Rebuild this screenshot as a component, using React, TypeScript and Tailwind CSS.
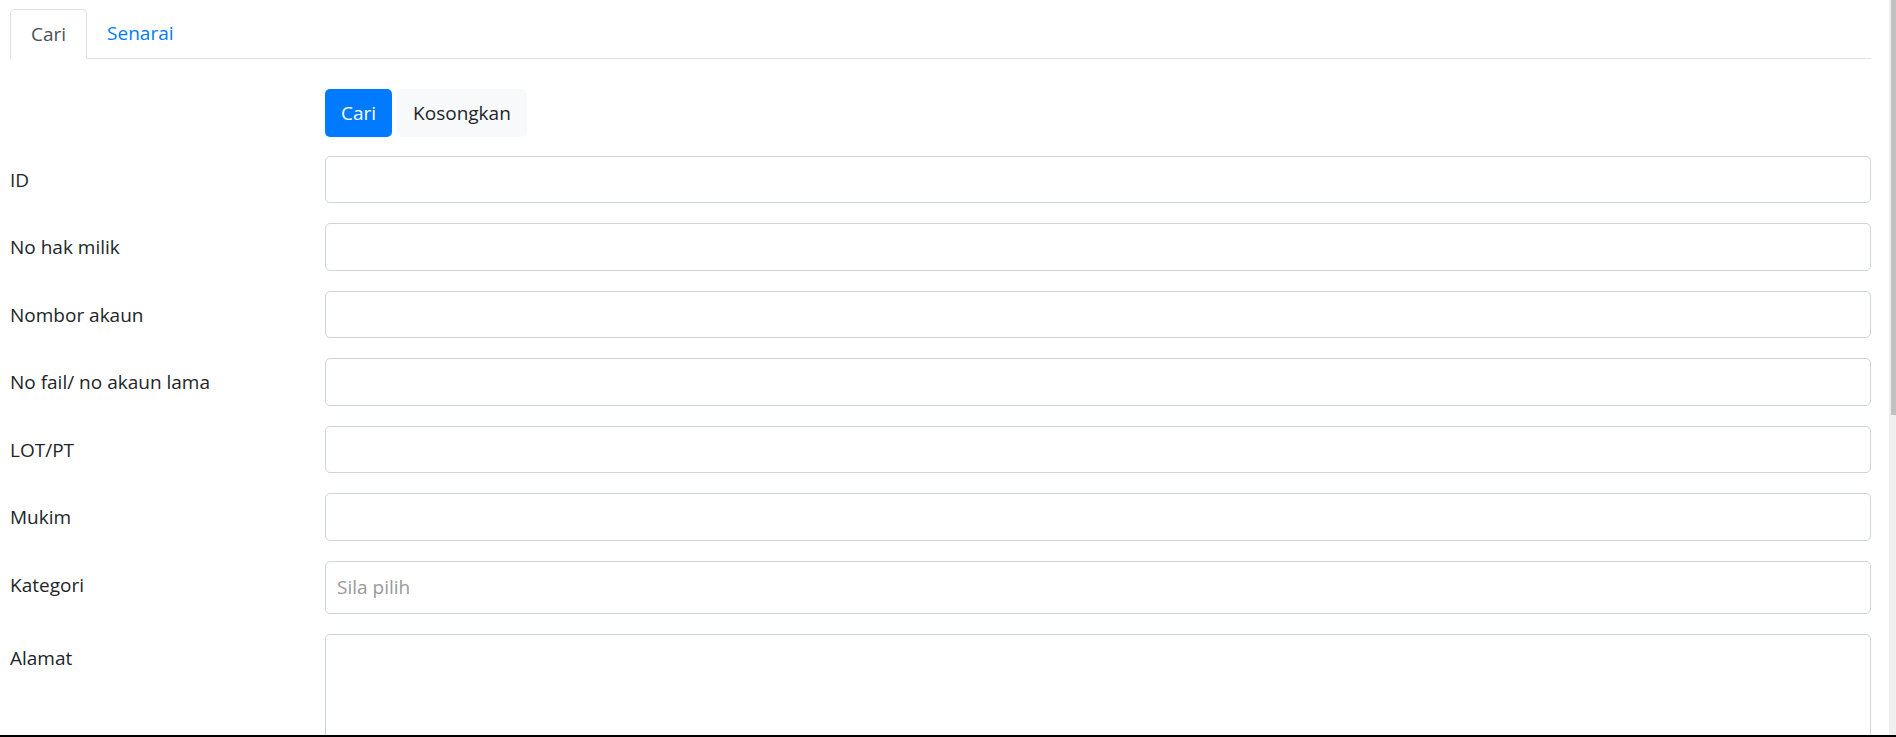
import React from "react";

const font = "font-['Open_Sans',sans-serif]";

const fields = ["ID", "No hak milik", "Nombor akaun", "No fail/ no akaun lama", "LOT/PT", "Mukim"];

const FieldRow = ({ label }: { label: string }) => (
  <div className="flex mb-[20px]">
    <label className="w-[315px] shrink-0 pt-[9px] text-[19px] leading-[30px] text-[#212529]">{label}</label>
    <input
      type="text"
      className="flex-1 h-[47.5px] rounded-[5px] border border-[#ced4da] bg-white px-[15px] text-[19px] outline-none"
    />
  </div>
);

export default function App() {
  return (
    <div className={`relative flex h-[737px] w-full overflow-hidden bg-white ${font}`}>
      <main className="flex-1 pl-[10px] pr-[18px] pt-[9px]">
        {/* tabs */}
        <nav className="flex border-b border-[#dee2e6] text-[19px] leading-[30px]">
          <a className="-mb-px rounded-t-[5px] border border-[#dee2e6] border-b-white bg-white px-[20px] py-[9px] text-[#495057]">
            Cari
          </a>
          <a className="px-[20px] py-[9px] text-[#007bff]">Senarai</a>
        </nav>

        <div className="mt-[30px] mb-[19px] flex pl-[315px] text-[19px] leading-[30px]">
          <button className="h-[47.5px] rounded-[5px] bg-[#007bff] px-[16px] text-white">Cari</button>
          <button className="ml-[5px] h-[47.5px] rounded-[5px] bg-[#f8f9fa] px-[16px] text-[#212529]">Kosongkan</button>
        </div>

        {fields.map((f) => (
          <FieldRow key={f} label={f} />
        ))}

        <div className="flex mb-[20px]">
          <label className="w-[315px] shrink-0 pt-[9px] text-[19px] leading-[30px] text-[#212529]">Kategori</label>
          <div className="flex h-[53px] flex-1 items-center rounded-[5px] border border-[#ced4da] bg-white px-[11px] text-[19px] text-[#999999]">
            Sila pilih
          </div>
        </div>

        <div className="flex">
          <label className="w-[315px] shrink-0 pt-[9px] text-[19px] leading-[30px] text-[#212529]">Alamat</label>
          <textarea className="h-[160px] flex-1 resize-none rounded-[5px] border border-[#ced4da] bg-white outline-none" />
        </div>
      </main>

      {/* page scrollbar */}
      <div className="flex w-[7px] shrink-0 justify-end bg-[#efefef]">
        <div className="h-[415px] w-[5px] bg-[#c1c1c1]" />
      </div>

      <div className="absolute bottom-0 left-0 h-[2px] w-full bg-black" />
    </div>
  );
}
